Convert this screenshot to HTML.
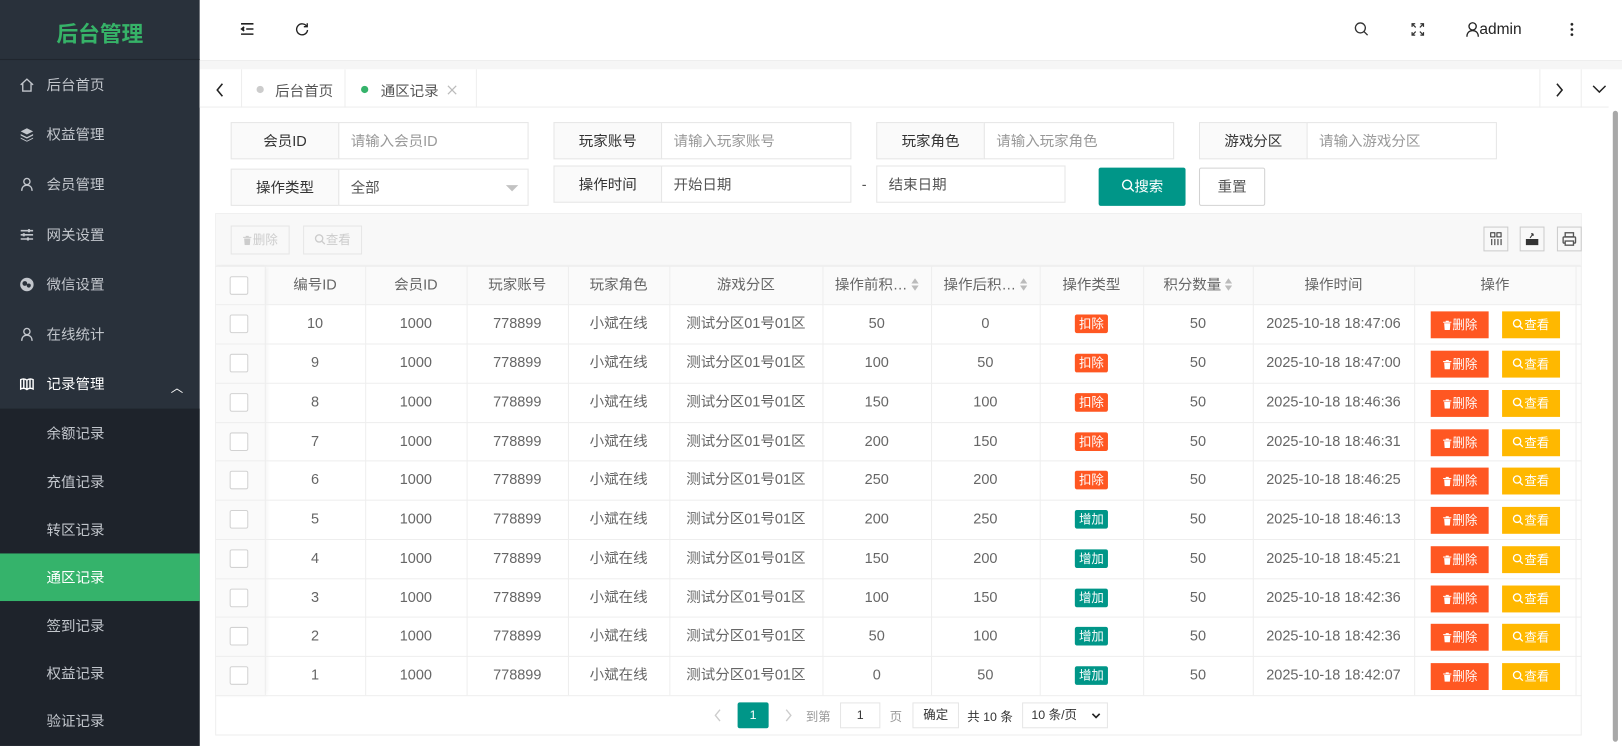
<!DOCTYPE html>
<html><head><meta charset="utf-8">
<style>
*{margin:0;padding:0;box-sizing:border-box}
html,body{width:1622px;height:745px;overflow:hidden;background:#fff}
body{font-family:"Liberation Sans","Noto Sans CJK SC",sans-serif;font-size:14px;color:#333}
#w{position:absolute;left:0;top:0;width:1568px;height:721px;transform:scale(1.0345);transform-origin:0 0;background:#fff}
.a{position:absolute}
.side{left:0;top:0;width:193px;height:721px;background:#29313b}
.logo{left:0;top:0;width:193px;height:58px;border-bottom:1px solid #20262e;color:#36b368;font-size:21px;font-weight:bold;text-align:center;line-height:68px}
.mi{left:0;width:193px;height:48px;color:#c2c6cc;line-height:48px;padding-left:45px}
.mi svg{position:absolute;left:19px;top:17px}
.sub{left:0;top:395px;width:193px;height:326px;background:#1e232b}
.si{left:0;width:193px;height:46px;line-height:46px;padding-left:45px;color:#c2c6cc}
.fl{height:36px;border:1px solid #e6e6e6;background:#fafafa;text-align:center;line-height:34px;color:#333}
.fi{height:36px;border:1px solid #e6e6e6;background:#fff;line-height:34px;padding-left:11px;color:#999}
.th,.td{position:absolute;text-align:center;color:#666;white-space:nowrap}
.cb{position:absolute;width:18px;height:18px;border:1px solid #d2d2d2;border-radius:2px;background:#fff}
.tag{display:inline-block;color:#fff;font-size:12px;line-height:18px;padding:0 4px;border-radius:2px}
.btn{position:absolute;color:#fff;font-size:12px;text-align:center;line-height:26px;height:26px;width:56px}
.btn svg,.dis svg{vertical-align:-1px}
.hl{position:absolute;left:208px;width:1321px;height:1px;background:#eee}
.vl{position:absolute;width:1px;background:#eee}
.dis{position:absolute;top:218px;width:57px;height:28px;border:1px solid #e6e6e6;color:#ccc;font-size:12px;line-height:26px;text-align:center}
</style></head><body><div id="w">
<div class="a side"></div>
<div class="a logo">后台管理</div>
<div class="a mi" style="top:58px"><svg width="14" height="14" viewBox="0 0 14 14" fill="none" stroke="#c2c6cc" stroke-width="1.3"><path d="M1 7L7 1.5 13 7M3 5.5V13H11V5.5"/></svg>后台首页</div>
<div class="a mi" style="top:106px"><svg width="14" height="14" viewBox="0 0 14 14" fill="#c2c6cc"><path d="M7 1L13 4 7 7 1 4Z M1 6.5L7 9.5 13 6.5 13 8 7 11 1 8Z M1 10L7 13 13 10 13 11 7 14 1 11Z"/></svg>权益管理</div>
<div class="a mi" style="top:154px"><svg width="14" height="14" viewBox="0 0 14 14" fill="none" stroke="#c2c6cc" stroke-width="1.3"><circle cx="7" cy="4.5" r="3"/><path d="M2 13.5C2 10 4 8 7 8S12 10 12 13.5"/></svg>会员管理</div>
<div class="a mi" style="top:203px"><svg width="14" height="14" viewBox="0 0 14 14" stroke="#c2c6cc" stroke-width="1.5"><path d="M1 3H13M1 7H13M1 11H13"/><path d="M9 1.5V4.5M4 5.5V8.5M8 9.5V12.5" stroke-width="2"/></svg>网关设置</div>
<div class="a mi" style="top:251px"><svg width="14" height="14" viewBox="0 0 14 14"><circle cx="7" cy="7" r="6.5" fill="#c2c6cc"/><circle cx="5" cy="6" r="2.3" fill="#29313b"/><circle cx="8.8" cy="8" r="2" fill="#29313b"/></svg>微信设置</div>
<div class="a mi" style="top:299px"><svg width="14" height="14" viewBox="0 0 14 14" fill="none" stroke="#c2c6cc" stroke-width="1.3"><circle cx="7" cy="4.5" r="3"/><path d="M2 13.5C2 10 4 8 7 8S12 10 12 13.5"/></svg>在线统计</div>
<div class="a mi" style="top:347px;color:#fff"><svg width="14" height="14" viewBox="0 0 14 14" fill="none" stroke="#fff" stroke-width="1.4"><path d="M1 3C3 2 5 2 7 3.5 9 2 11 2 13 3V12C11 11 9 11 7 12.5 5 11 3 11 1 12Z M7 3.5V12.5 M4 3V11 M10 3V11"/></svg>记录管理<span style="position:absolute;left:165px;top:4px;font-size:12px">︿</span></div>
<div class="a sub"></div>
<div class="a si" style="top:396px">余额记录</div>
<div class="a si" style="top:443px">充值记录</div>
<div class="a si" style="top:489px">转区记录</div>
<div class="a si" style="top:535px;background:#35b36b;color:#fff">通区记录</div>
<div class="a si" style="top:582px">签到记录</div>
<div class="a si" style="top:628px">权益记录</div>
<div class="a si" style="top:674px">验证记录</div>

<!-- header -->
<div class="a" style="left:193px;top:58px;width:1375px;height:1px;background:#eee"></div>
<svg class="a" style="left:232px;top:21px" width="14" height="14" viewBox="0 0 14 14" stroke="#222" stroke-width="1.5"><path d="M1 2H13M6 7H13M1 12H13"/><path d="M4 5L1.5 7 4 9" fill="#222"/></svg>
<svg class="a" style="left:285px;top:21px" width="14" height="14" viewBox="0 0 14 14" fill="none" stroke="#222" stroke-width="1.3"><path d="M11.5 4.5A5.3 5.3 0 1 0 12.3 8"/><path d="M12 1.5V4.8H8.7"/></svg>
<svg class="a" style="left:1309px;top:21px" width="15" height="15" viewBox="0 0 15 15" fill="none" stroke="#333" stroke-width="1.3"><circle cx="6" cy="6" r="4.8"/><path d="M9.5 9.5L13 13"/></svg>
<svg class="a" style="left:1364px;top:22px" width="13" height="13" viewBox="0 0 13 13" fill="none" stroke="#333" stroke-width="1.2"><path d="M1 4V1H4M9 1H12V4M12 9V12H9M4 12H1V9M1 1L4.5 4.5M12 1L8.5 4.5M12 12L8.5 8.5M1 12L4.5 8.5"/></svg>
<svg class="a" style="left:1417px;top:21px" width="13" height="15" viewBox="0 0 13 15" fill="none" stroke="#222" stroke-width="1.3"><circle cx="6.5" cy="4.5" r="3.5"/><path d="M1 14.5C1 10.5 3.5 8.5 6.5 8.5S12 10.5 12 14.5"/></svg>
<div class="a" style="left:1430px;top:20px;font-size:15px;color:#222">admin</div>
<div class="a" style="left:1518px;top:21px;width:3px;height:14px;background:radial-gradient(circle,#222 1.2px,transparent 1.5px) 0 0/3px 5px"></div>

<!-- tabs -->
<div class="a" style="left:193px;top:59px;width:1375px;height:8px;background:#f6f6f6"></div>
<div class="a" style="left:193px;top:67px;width:1362px;height:37px;background:#fff;border-bottom:1px solid #eee"></div>
<div class="a" style="left:233px;top:67px;width:1px;height:37px;background:#eee"></div>
<div class="a" style="left:333px;top:67px;width:1px;height:37px;background:#eee"></div>
<div class="a" style="left:460px;top:67px;width:1px;height:37px;background:#eee"></div>
<div class="a" style="left:1488px;top:67px;width:1px;height:37px;background:#eee"></div>
<div class="a" style="left:1528px;top:67px;width:1px;height:37px;background:#eee"></div>
<svg class="a" style="left:208px;top:80px" width="10" height="14" viewBox="0 0 10 14" fill="none" stroke="#222" stroke-width="1.5"><path d="M7 1L2 7 7 13"/></svg>
<svg class="a" style="left:1502px;top:80px" width="10" height="14" viewBox="0 0 10 14" fill="none" stroke="#222" stroke-width="1.5"><path d="M3 1L8 7 3 13"/></svg>
<svg class="a" style="left:1539px;top:81px" width="14" height="10" viewBox="0 0 14 10" fill="none" stroke="#222" stroke-width="1.4"><path d="M1 2L7 8 13 2"/></svg>
<div class="a" style="left:248px;top:83px;width:7px;height:7px;border-radius:50%;background:#ccc"></div>
<div class="a" style="left:266px;top:78px;color:#555">后台首页</div>
<div class="a" style="left:349px;top:83px;width:7px;height:7px;border-radius:50%;background:#35b36b"></div>
<div class="a" style="left:368px;top:78px;color:#555">通区记录</div>
<svg class="a" style="left:432px;top:82px" width="10" height="10" viewBox="0 0 10 10" stroke="#bbb" stroke-width="1.2"><path d="M1 1L9 9M9 1L1 9"/></svg>
<!-- scrollbar -->
<div class="a" style="left:1559px;top:107px;width:5px;height:610px;background:#a8a8a8;border-radius:3px"></div>

<!-- form -->
<div class="a fl" style="left:223px;top:118px;width:105px">会员ID</div><div class="a fi" style="left:327px;top:118px;width:184px">请输入会员ID</div>
<div class="a fl" style="left:535px;top:118px;width:105px">玩家账号</div><div class="a fi" style="left:639px;top:118px;width:184px">请输入玩家账号</div>
<div class="a fl" style="left:847px;top:118px;width:105px">玩家角色</div><div class="a fi" style="left:951px;top:118px;width:184px">请输入玩家角色</div>
<div class="a fl" style="left:1159px;top:118px;width:105px">游戏分区</div><div class="a fi" style="left:1263px;top:118px;width:184px">请输入游戏分区</div>
<div class="a fl" style="left:223px;top:163px;width:105px">操作类型</div><div class="a fi" style="left:327px;top:163px;width:184px;color:#555">全部</div>
<div class="a" style="left:489px;top:179px;border:6px solid transparent;border-top-color:#c2c2c2"></div>
<div class="a fl" style="left:535px;top:160px;width:105px">操作时间</div><div class="a fi" style="left:639px;top:160px;width:184px;color:#555">开始日期</div>
<div class="a" style="left:833px;top:170px;color:#555">-</div>
<div class="a fi" style="left:847px;top:160px;width:183px;color:#555">结束日期</div>
<div class="a" style="left:1062px;top:162px;width:84px;height:37px;background:#009688;color:#fff;border-radius:2px;text-align:center;line-height:37px"><svg width="13" height="13" viewBox="0 0 13 13" fill="none" stroke="#fff" stroke-width="1.4" style="vertical-align:-1px"><circle cx="5.5" cy="5.5" r="4.3"/><path d="M8.6 8.6L12 12"/></svg>搜索</div>
<div class="a" style="left:1159px;top:162px;width:64px;height:37px;border:1px solid #d2d2d2;border-radius:2px;text-align:center;line-height:35px;color:#555">重置</div>

<!-- table -->
<div class="a" style="left:208px;top:206px;width:1321px;height:505px;border:1px solid #eee;background:#fff"></div>
<div class="a" style="left:209px;top:207px;width:1319px;height:50px;background:#f8f8f8;border-bottom:1px solid #eee"></div>
<div class="dis" style="left:223px"><svg width="10" height="10" viewBox="0 0 10 10" fill="#ccc"><path d="M1 2H9V3H1ZM3.5 1H6.5V2H3.5ZM2 3.5H8L7.5 10H2.5Z"/></svg>删除</div>
<div class="dis" style="left:293px"><svg width="11" height="11" viewBox="0 0 11 11" fill="none" stroke="#ccc" stroke-width="1.3"><circle cx="4.5" cy="4.5" r="3.5"/><path d="M7 7L10 10"/></svg>查看</div>
<div class="a" style="left:1434px;top:219px;width:24px;height:24px;border:1px solid #ccc"><svg width="22" height="22" viewBox="0 0 22 22" fill="none" stroke="#333"><rect x="6" y="5" width="4" height="4"/><rect x="12" y="5" width="4" height="4"/><path d="M7 11V17M10 11V17M13 11V17M16 11V17"/></svg></div>
<div class="a" style="left:1469px;top:219px;width:24px;height:24px;border:1px solid #ccc"><svg width="22" height="22" viewBox="0 0 22 22"><path d="M5 11H17V17H5Z" fill="#333"/><path d="M9 10L12 6M12 6H10M12 6V8" stroke="#333" fill="none"/></svg></div>
<div class="a" style="left:1505px;top:219px;width:24px;height:24px;border:1px solid #ccc"><svg width="22" height="22" viewBox="0 0 22 22" fill="none" stroke="#555" stroke-width="1.3"><rect x="7" y="5" width="8" height="4"/><rect x="5" y="9" width="12" height="6" rx="1"/><rect x="7" y="13" width="8" height="4" fill="#fff"/></svg></div>
<div class="a" style="left:209px;top:258px;width:1319px;height:36px;background:#fafafa"></div>
<div class="a" style="left:209px;top:258px;width:47px;height:414px;background:#fafafa;box-shadow:2px 0 4px rgba(0,0,0,.05)"></div>
<div id="tb"></div>
</div>
<script>
var cols=[208,256,353,451,549,647,795,900,1005,1105,1211,1367,1523];
var tb=document.getElementById('tb'),h='';
var rt=[257,294,332,370,408,445,483,521,559,596,634,672];
rt.forEach(function(y){h+='<div class="hl" style="top:'+y+'px"></div>';});
cols.slice(1).forEach(function(x){h+='<div class="vl" style="left:'+x+'px;top:257px;height:415px"></div>';});
var hd=['编号ID','会员ID','玩家账号','玩家角色','游戏分区','操作前积…','操作后积…','操作类型','积分数量','操作时间','操作'];
var sort={5:1,6:1,8:1};
function cell(i,y,t,cl){var l=cols[i+1],w=cols[i+2]-cols[i+1];return '<div class="'+cl+'" style="left:'+l+'px;width:'+w+'px;top:'+y+'px;height:37px;line-height:37px">'+t+'</div>';}
var trash='<svg width="10" height="10" viewBox="0 0 10 10" fill="#fff"><path d="M1 2H9V3H1ZM3.5 1H6.5V2H3.5ZM2 3.5H8L7.5 10H2.5Z"/></svg>';
var mag='<svg width="11" height="11" viewBox="0 0 11 11" fill="none" stroke="#fff" stroke-width="1.3"><circle cx="4.5" cy="4.5" r="3.5"/><path d="M7 7L10 10"/></svg>';
hd.forEach(function(t,i){var x=sort[i]?t+' <svg width="7" height="12" viewBox="0 0 7 12" style="vertical-align:-1px" fill="#bbb"><path d="M3.5 0L7 5H0ZM0 7H7L3.5 12Z"/></svg>':t;h+=cell(i,257,x,'th');});
h+='<div class="cb" style="left:222px;top:267px"></div>';
var d=[[10,50,0,0,'18:47:06'],[9,100,50,0,'18:47:00'],[8,150,100,0,'18:46:36'],[7,200,150,0,'18:46:31'],[6,250,200,0,'18:46:25'],[5,200,250,1,'18:46:13'],[4,150,200,1,'18:45:21'],[3,100,150,1,'18:42:36'],[2,50,100,1,'18:42:36'],[1,0,50,1,'18:42:07']];
d.forEach(function(r,k){var y=rt[k+1];
h+='<div class="cb" style="left:222px;top:'+(y+10)+'px"></div>';
var v=[r[0],1000,778899,'小斌在线','测试分区01号01区',r[1],r[2],r[3]?'<span class="tag" style="background:#009688">增加</span>':'<span class="tag" style="background:#ff5722">扣除</span>',50,'2025-10-18 '+r[4],''];
v.forEach(function(t,i){h+=cell(i,y,t,'td');});
h+='<div class="btn" style="left:1383px;top:'+(y+7)+'px;background:#ff5722">'+trash+'删除</div>';
h+='<div class="btn" style="left:1452px;top:'+(y+7)+'px;background:#ffb800">'+mag+'查看</div>';
});
h+='<svg class="a" style="left:690px;top:685px" width="8" height="13" viewBox="0 0 8 13" fill="none" stroke="#ccc" stroke-width="1.3"><path d="M6 1L1.5 6.5 6 12"/></svg>';
h+='<div class="a" style="left:713px;top:679px;width:30px;height:25px;background:#009688;color:#fff;border-radius:2px;text-align:center;line-height:25px;font-size:12px">1</div>';
h+='<svg class="a" style="left:758px;top:685px" width="8" height="13" viewBox="0 0 8 13" fill="none" stroke="#ccc" stroke-width="1.3"><path d="M2 1L6.5 6.5 2 12"/></svg>';
h+='<div class="a" style="left:779px;top:684px;color:#999;font-size:12px">到第</div>';
h+='<div class="a" style="left:812px;top:679px;width:39px;height:25px;border:1px solid #e6e6e6;text-align:center;line-height:23px;font-size:12px">1</div>';
h+='<div class="a" style="left:860px;top:684px;color:#999;font-size:12px">页</div>';
h+='<div class="a" style="left:882px;top:679px;width:45px;height:25px;border:1px solid #e6e6e6;text-align:center;line-height:23px;font-size:12px">确定</div>';
h+='<div class="a" style="left:935px;top:684px;color:#333;font-size:12px">共 10 条</div>';
h+='<div class="a" style="left:988px;top:679px;width:83px;height:25px;border:1px solid #e6e6e6;line-height:23px;font-size:12px;padding-left:8px">10 条/页<svg style="position:absolute;right:6px;top:9px" width="9" height="6" viewBox="0 0 9 6" fill="none" stroke="#222" stroke-width="1.6"><path d="M1 1L4.5 4.5 8 1"/></svg></div>';
tb.outerHTML=h;
</script>
</body></html>
